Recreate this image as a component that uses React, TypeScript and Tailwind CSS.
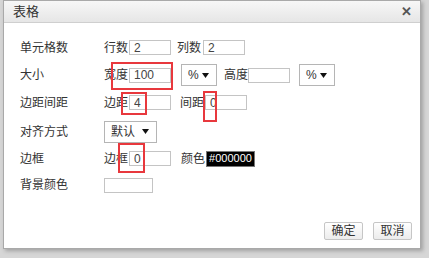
const font = { fontFamily: '"Liberation Sans", "Noto Sans CJK SC", sans-serif' };

function Field({ value = '', w = 'w-[42px]' }: { value?: string; w?: string }) {
  return (
    <input
      readOnly
      value={value}
      className={`${w} shrink-0 h-[15px] border border-[#c4c4c4] bg-white px-[4px] text-[12px] leading-none text-[#444] outline-none`}
    />
  );
}

function Select({ label, w }: { label: string; w: string }) {
  return (
    <div
      className={`${w} shrink-0 h-[22px] flex items-center justify-between border border-[#b5b5b5] bg-white pl-[6px] pr-[7px] text-[12px] text-[#333]`}
    >
      <span>{label}</span>
      <svg width="7" height="5" viewBox="0 0 7 5" className="shrink-0">
        <path d="M0 0h7L3.5 5z" fill="#111" />
      </svg>
    </div>
  );
}

function Row({ label, h, children }: { label: string; h: string; children?: React.ReactNode }) {
  return (
    <div className={`flex items-center ${h}`}>
      <div className="w-[84px] shrink-0 text-[12px] text-[#333]">{label}</div>
      <div className="flex items-center text-[12px] text-[#333]">{children}</div>
    </div>
  );
}

function Mark({ className }: { className: string }) {
  return <div className={`absolute border-2 border-[#e8383d] ${className}`} />;
}

export default function App() {
  return (
    <div className="w-[429px] h-[258px] bg-[#d6d6d6] overflow-hidden" style={font}>
      <div className="relative ml-[3px] w-[418px] h-[249px] flex flex-col bg-white border border-[#a9a9a9] shadow-[2px_2px_4px_rgba(0,0,0,0.25)]">
        <div className="h-[22px] flex items-center justify-between border-b border-[#cfcfcf] bg-gradient-to-b from-[#f7f7f7] to-[#e6e6e6] pl-[9px] pr-[8px]">
          <span className="text-[13px] text-[#333]">表格</span>
          <span className="text-[13px] font-bold text-[#555] leading-none">✕</span>
        </div>

        <div className="flex-1 flex flex-col pt-[11px] pl-[16px]">
          <Row label="单元格数" h="h-[27px]">
            <span className="mr-[1px]">行数</span>
            <Field value="2" />
            <span className="ml-[6px] mr-[2px]">列数</span>
            <Field value="2" />
          </Row>
          <Row label="大小" h="h-[28px]">
            <span className="mr-[1px]">宽度</span>
            <Field value="100" />
            <div className="ml-[10px]"><Select label="%" w="w-[36px]" /></div>
            <span className="ml-[7px]">高度</span>
            <Field w="w-[42px]" />
            <div className="ml-[9px]"><Select label="%" w="w-[36px]" /></div>
          </Row>
          <Row label="边距间距" h="h-[27px]">
            <span className="mr-[1px]">边距</span>
            <Field value="4" />
            <span className="ml-[9px] mr-[1px]">间距</span>
            <Field value="0" />
          </Row>
          <Row label="对齐方式" h="h-[31px]">
            <Select label="默认" w="w-[53px]" />
          </Row>
          <Row label="边框" h="h-[23px]">
            <span className="mr-[1px]">边框</span>
            <Field value="0" />
            <span className="ml-[10px] mr-[1px]">颜色</span>
            <span className="shrink-0 h-[16px] w-[49px] flex items-center justify-center bg-black border border-[#777] text-[11px] text-white">
              #000000
            </span>
          </Row>
          <Row label="背景颜色" h="h-[30px]">
            <Field w="w-[49px]" />
          </Row>
        </div>

        <div className="flex justify-end gap-[10px] pr-[8px] pb-[8px]">
          <button className="w-[39px] h-[18px] rounded-[2px] border border-[#c6c6c6] bg-gradient-to-b from-white to-[#ececec] text-[12px] text-[#333] leading-none">
            确定
          </button>
          <button className="w-[39px] h-[18px] rounded-[2px] border border-[#c6c6c6] bg-gradient-to-b from-white to-[#ececec] text-[12px] text-[#333] leading-none">
            取消
          </button>
        </div>

        <Mark className="left-[107px] top-[61px] w-[62px] h-[28px]" />
        <Mark className="left-[117px] top-[91px] w-[26px] h-[23px]" />
        <Mark className="left-[199px] top-[90px] w-[14px] h-[31px]" />
        <Mark className="left-[114px] top-[142px] w-[27px] h-[30px]" />
      </div>
    </div>
  );
}
